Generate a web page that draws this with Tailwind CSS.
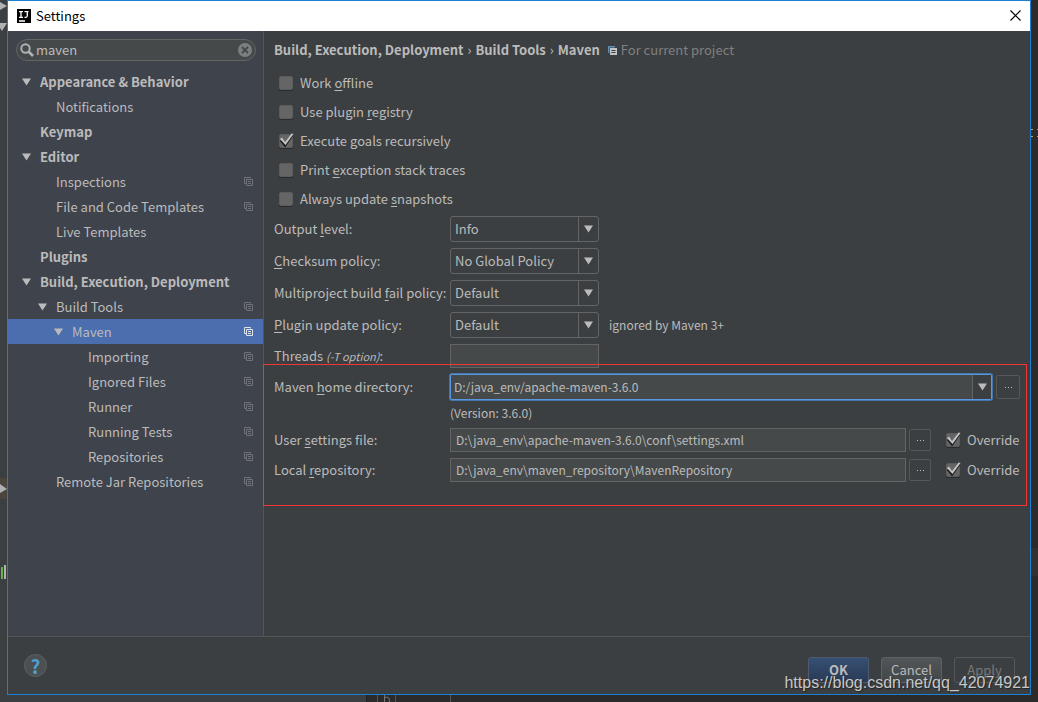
<!DOCTYPE html>
<html lang="en">
<head>
<meta charset="utf-8">
<meta name="viewport" content="width=device-width, initial-scale=1">
<title>Settings</title>
<script src="https://cdn.jsdelivr.net/npm/@tailwindcss/browser@4"></script>
</head>
<body class="relative flex min-h-screen flex-col overflow-hidden bg-[#2b2b2b] px-[7px] pb-[7px] font-['Noto_Sans_CJK_SC',sans-serif] text-[13px] leading-[18px] text-[#bbbbbb]">

<svg class="hidden">
  <symbol id="copy" viewBox="0 0 9 9"><path d="M6.5 1.5V.5H.5v6h2M2.5 2.5h6v6h-6zM4 4.5h3M4 6.5h3" fill="none" stroke="currentColor"/></symbol>
  <symbol id="down" viewBox="0 0 10 8"><path d="M0 0h10L5 8z" fill="currentColor"/></symbol>
  <symbol id="tick" viewBox="0 0 18 16"><path d="M4 7l4 5 7-10" fill="none" stroke="#1e1e1e" stroke-width="3"/><path d="M3 6l2-1.500L8 9 14.500.5l2 .5L8.500 12z" fill="#c4c4c4"/></symbol>
</svg>

<!-- editor window behind the dialog -->
<div aria-hidden="true" class="absolute inset-y-0 left-0 w-[7px] bg-[#3c3f41]">
  <svg class="h-[600px] w-[7px]" viewBox="0 0 7 600"><path d="M0 478h7v21H0z" fill="#4a463e"/><path d="M0 2l7 4-7 4zM0 23h7L2 31 0 28zM0 484l7 5-7 4z" fill="#afb1b3"/><path d="M1 567h2v12H1z" fill="#62b543"/><path d="M4 565h2v14H4z" fill="#afb1b3"/></svg>
</div>
<div aria-hidden="true" class="absolute bottom-0 left-0 flex h-[7px] w-full overflow-hidden bg-[#2b2b2b]">
  <div class="w-[367px] shrink-0 border-r border-[#222] bg-[#3c3f41]"></div>
  <svg class="h-[7px] w-[140px] shrink-0" viewBox="0 0 140 7"><path d="M10.500 0v7M28.500 0v7M83.500 0v7" stroke="#555"/><path d="M17.500 0v7M17.500 3q5-3 5 4" fill="none" stroke="#777"/></svg>
</div>
<svg aria-hidden="true" class="absolute top-[128px] right-0 h-[10px] w-[7px]" viewBox="0 0 7 10"><path d="M0 1.500h2M0 8.500h2M6 1.500h1M6 8.500h1" stroke="#c9a255"/></svg>
<div aria-hidden="true" class="absolute top-[548px] right-0 h-7 w-[7px] bg-[#323232]"></div>

<div class="relative flex flex-1 flex-col border border-[#1b80d3] bg-[#3c3f41]">
  <header class="flex h-[30px] items-center justify-between bg-white pr-[7px] pb-px pl-[9px] text-black">
    <div class="flex items-center gap-[5px]">
      <svg class="size-[14px]" viewBox="0 0 14 14"><path d="M0 0h14v14H0z"/><path d="M2 2.700h4M4 2.500v6M2 8.300h4M7.500 2.700h4M10.300 2.500v4.300q0 1.500-1.500 1.500H7.500M2 12h6" fill="none" stroke="#fff" stroke-width="1.300"/></svg>
      <h1>Settings</h1>
    </div>
    <button aria-label="Close" class="p-0.5"><svg class="size-[11px]" viewBox="0 0 11 11"><path d="M.5.5l10 10M10.500.5l-10 10" stroke="#000" stroke-width="1.200"/></svg></button>
  </header>

  <div class="flex flex-1">
    <nav class="flex w-64 shrink-0 flex-col border-r border-[#555555] bg-[#3f434c] pt-2">
      <label class="mr-[7px] mb-2 ml-2 flex h-[22px] items-center gap-0.5 rounded-full border border-[#646464] bg-[#45494a] px-[3px]">
        <svg class="size-[14px] shrink-0" viewBox="0 0 14 14"><circle cx="5.500" cy="5.500" r="4.200" fill="none" stroke="#afb1b3" stroke-width="2"/><path d="M8.500 8.500l4.500 4.500" stroke="#afb1b3" stroke-width="2.600"/></svg>
        <input aria-label="Search settings" value="maven" class="min-w-0 flex-1 bg-transparent outline-none">
        <button aria-label="Clear" class="grid size-[14px] shrink-0 place-items-center"><svg class="size-[14px]" viewBox="0 0 14 14"><circle cx="7" cy="7" r="7" fill="#7c7f80"/><path d="M4 4l6 6M10 4l-6 6" stroke="#45494a" stroke-width="1.800"/></svg></button>
      </label>
      <ul class="[&_li]:flex [&_li]:h-[25px] [&_li]:items-center [&_li]:pr-[10px] [&_span]:flex-1">
        <li class="gap-[9px] pl-[14px] font-bold"><svg class="h-2 w-[9px]"><use href="#down"/></svg><span>Appearance &amp; Behavior</span></li>
        <li class="pl-12"><span>Notifications</span></li>
        <li class="pl-8 font-bold"><span>Keymap</span></li>
        <li class="gap-[9px] pl-[14px] font-bold"><svg class="h-2 w-[9px]"><use href="#down"/></svg><span>Editor</span></li>
        <li class="pl-12"><span>Inspections</span><svg class="size-[9px] text-[#6f7277]"><use href="#copy"/></svg></li>
        <li class="pl-12"><span>File and Code Templates</span><svg class="size-[9px] text-[#6f7277]"><use href="#copy"/></svg></li>
        <li class="pl-12"><span>Live Templates</span></li>
        <li class="pl-8 font-bold"><span>Plugins</span></li>
        <li class="gap-[9px] pl-[14px] font-bold"><svg class="h-2 w-[9px]"><use href="#down"/></svg><span>Build, Execution, Deployment</span></li>
        <li class="gap-[9px] pl-[30px]"><svg class="h-2 w-[9px]"><use href="#down"/></svg><span>Build Tools</span><svg class="size-[9px] text-[#6f7277]"><use href="#copy"/></svg></li>
        <li class="gap-[9px] bg-[#4b6eaf] pl-[46px]"><svg class="h-2 w-[9px]"><use href="#down"/></svg><span>Maven</span><svg class="size-[9px] text-[#dfe3ea]"><use href="#copy"/></svg></li>
        <li class="pl-20"><span>Importing</span><svg class="size-[9px] text-[#6f7277]"><use href="#copy"/></svg></li>
        <li class="pl-20"><span>Ignored Files</span><svg class="size-[9px] text-[#6f7277]"><use href="#copy"/></svg></li>
        <li class="pl-20"><span>Runner</span><svg class="size-[9px] text-[#6f7277]"><use href="#copy"/></svg></li>
        <li class="pl-20"><span>Running Tests</span><svg class="size-[9px] text-[#6f7277]"><use href="#copy"/></svg></li>
        <li class="pl-20"><span>Repositories</span><svg class="size-[9px] text-[#6f7277]"><use href="#copy"/></svg></li>
        <li class="pl-12"><span>Remote Jar Repositories</span><svg class="size-[9px] text-[#6f7277]"><use href="#copy"/></svg></li>
      </ul>
    </nav>

    <main class="relative min-w-0 flex-1 px-[10px]">
      <div class="flex h-[37px] items-center gap-1 pt-px font-bold">
        <span>Build, Execution, Deployment</span><span class="font-normal">›</span><span>Build Tools</span><span class="font-normal">›</span><span>Maven</span>
        <svg class="ml-1 size-[9px]" viewBox="0 0 9 9"><path d="M0 0h7v1.500H1.500V7H0z" fill="#5b8fb0"/><path d="M2 2h7v7H2z" fill="#c0c3c5"/><path d="M3.500 4.500h4M3.500 6.500h4" stroke="#3c3f41"/></svg>
        <span class="font-normal text-[#808080]">For current project</span>
      </div>

      <div class="flex flex-col items-start pl-[3px] [&_input]:col-start-1 [&_input]:row-start-1 [&_svg]:col-start-1 [&_svg]:row-start-1">
        <label class="flex h-[29px] items-center gap-[5px]"><span class="grid place-items-center"><input type="checkbox" class="peer size-[14px] appearance-none rounded-xs border border-[#5a5c5d] bg-[#656565] shadow-[0_1px_0_#292b2c]"><svg class="pointer-events-none invisible h-4 w-[18px] peer-checked:visible"><use href="#tick"/></svg></span><span>Work <u class="underline-offset-2">o</u>ffline</span></label>
        <label class="flex h-[29px] items-center gap-[5px]"><span class="grid place-items-center"><input type="checkbox" class="peer size-[14px] appearance-none rounded-xs border border-[#5a5c5d] bg-[#656565] shadow-[0_1px_0_#292b2c]"><svg class="pointer-events-none invisible h-4 w-[18px] peer-checked:visible"><use href="#tick"/></svg></span><span>Use plugin <u class="underline-offset-2">r</u>egistry</span></label>
        <label class="flex h-[29px] items-center gap-[5px]"><span class="grid place-items-center"><input type="checkbox" checked class="peer size-[14px] appearance-none rounded-xs border border-[#5a5c5d] bg-[#656565] shadow-[0_1px_0_#292b2c]"><svg class="pointer-events-none invisible h-4 w-[18px] peer-checked:visible"><use href="#tick"/></svg></span><span>Execute <u class="underline-offset-2">g</u>oals recursively</span></label>
        <label class="flex h-[29px] items-center gap-[5px]"><span class="grid place-items-center"><input type="checkbox" class="peer size-[14px] appearance-none rounded-xs border border-[#5a5c5d] bg-[#656565] shadow-[0_1px_0_#292b2c]"><svg class="pointer-events-none invisible h-4 w-[18px] peer-checked:visible"><use href="#tick"/></svg></span><span>Print <u class="underline-offset-2">e</u>xception stack traces</span></label>
        <label class="flex h-[29px] items-center gap-[5px]"><span class="grid place-items-center"><input type="checkbox" class="peer size-[14px] appearance-none rounded-xs border border-[#5a5c5d] bg-[#656565] shadow-[0_1px_0_#292b2c]"><svg class="pointer-events-none invisible h-4 w-[18px] peer-checked:visible"><use href="#tick"/></svg></span><span>Always update <u class="underline-offset-2">s</u>napshots</span></label>
      </div>

      <div class="mt-[3px] grid grid-cols-[176px_minmax(0,1fr)] items-center gap-y-1.5">
        <label for="output">Output <u class="underline-offset-2">l</u>evel:</label>
        <div class="grid h-[26px] w-[149px]">
          <select id="output" class="col-start-1 row-start-1 appearance-none rounded-[3px] border border-[#646464] pb-px pl-1 outline-none"><option>Info</option></select>
          <span class="pointer-events-none col-start-1 row-start-1 my-px mr-px grid w-5 place-items-center justify-self-end border-l border-[#646464]"><svg class="h-2 w-[9px]"><use href="#down"/></svg></span>
        </div>
        <label for="checksum"><u class="underline-offset-2">C</u>hecksum policy:</label>
        <div class="grid h-[26px] w-[149px]">
          <select id="checksum" class="col-start-1 row-start-1 appearance-none rounded-[3px] border border-[#646464] pb-px pl-1 outline-none"><option>No Global Policy</option></select>
          <span class="pointer-events-none col-start-1 row-start-1 my-px mr-px grid w-5 place-items-center justify-self-end border-l border-[#646464]"><svg class="h-2 w-[9px]"><use href="#down"/></svg></span>
        </div>
        <label for="fail">Multiproject build <u class="underline-offset-2">f</u>ail policy:</label>
        <div class="grid h-[26px] w-[149px]">
          <select id="fail" class="col-start-1 row-start-1 appearance-none rounded-[3px] border border-[#646464] pb-px pl-1 outline-none"><option>Default</option></select>
          <span class="pointer-events-none col-start-1 row-start-1 my-px mr-px grid w-5 place-items-center justify-self-end border-l border-[#646464]"><svg class="h-2 w-[9px]"><use href="#down"/></svg></span>
        </div>
        <label for="update"><u class="underline-offset-2">P</u>lugin update policy:</label>
        <div class="flex items-center gap-[10px]">
          <div class="grid h-[26px] w-[149px]">
            <select id="update" class="col-start-1 row-start-1 appearance-none rounded-[3px] border border-[#646464] pb-px pl-1 outline-none"><option>Default</option></select>
            <span class="pointer-events-none col-start-1 row-start-1 my-px mr-px grid w-5 place-items-center justify-self-end border-l border-[#646464]"><svg class="h-2 w-[9px]"><use href="#down"/></svg></span>
          </div>
          <span class="text-[12px]">ignored by Maven 3+</span>
        </div>
        <label for="threads">Threads <i class="text-[11px]">(-T option)</i>:</label>
        <input id="threads" class="h-6 w-[149px] border border-[#646464] bg-[#45494a] px-1 outline-none">

        <label for="home">Maven <u class="underline-offset-2">h</u>ome directory:</label>
        <div class="flex items-center gap-1">
          <div class="flex h-[26px] min-w-0 flex-1 rounded-xs border border-[#5a97dc] bg-[#45494a] ring-1 ring-[#4377ab]">
            <input id="home" value="D:/java_env/apache-maven-3.6.0" class="min-w-0 flex-1 pb-px pl-[3px] text-[12px] outline-none">
            <button aria-label="Show list" class="grid w-[19px] place-items-center border-l border-[#646464] bg-[#3c3f41]"><svg class="h-2 w-[9px]"><use href="#down"/></svg></button>
          </div>
          <button aria-label="Browse Maven home" class="grid size-6 place-items-center rounded-xs border border-[#55585a]"><svg class="h-px w-[7px]" viewBox="0 0 7 1"><path d="M0 0h1v1H0zM3 0h1v1H3zM6 0h1v1H6z" fill="#bbb"/></svg></button>
        </div>
        <p class="col-start-2 h-4 text-[12px] leading-[14px]">(Version: 3.6.0)</p>

        <label for="user">User <u class="underline-offset-2">s</u>ettings file:</label>
        <div class="flex items-center">
          <input id="user" value="D:\java_env\apache-maven-3.6.0\conf\settings.xml" class="h-6 min-w-0 flex-1 border border-[#646464] bg-[#45494a] pb-0.5 pl-[5px] text-[12px] outline-none">
          <button aria-label="Browse user settings file" class="ml-[3px] grid size-[22px] place-items-center rounded-xs border border-[#55585a]"><svg class="h-px w-[7px]" viewBox="0 0 7 1"><path d="M0 0h1v1H0zM3 0h1v1H3zM6 0h1v1H6z" fill="#bbb"/></svg></button>
          <label class="ml-[13px] flex w-[76px] items-center gap-[5px]"><span class="grid shrink-0 place-items-center"><input type="checkbox" checked class="peer col-start-1 row-start-1 size-[14px] appearance-none rounded-xs border border-[#5a5c5d] bg-[#656565] shadow-[0_1px_0_#292b2c]"><svg class="pointer-events-none invisible col-start-1 row-start-1 h-4 w-[18px] peer-checked:visible"><use href="#tick"/></svg></span>Override</label>
        </div>

        <label for="repo">Local <u class="underline-offset-2">r</u>epository:</label>
        <div class="flex items-center">
          <input id="repo" value="D:\java_env\maven_repository\MavenRepository" class="h-6 min-w-0 flex-1 border border-[#646464] bg-[#45494a] pb-0.5 pl-[5px] text-[12px] outline-none">
          <button aria-label="Browse local repository" class="ml-[3px] grid size-[22px] place-items-center rounded-xs border border-[#55585a]"><svg class="h-px w-[7px]" viewBox="0 0 7 1"><path d="M0 0h1v1H0zM3 0h1v1H3zM6 0h1v1H6z" fill="#bbb"/></svg></button>
          <label class="ml-[13px] flex w-[76px] items-center gap-[5px]"><span class="grid shrink-0 place-items-center"><input type="checkbox" checked class="peer col-start-1 row-start-1 size-[14px] appearance-none rounded-xs border border-[#5a5c5d] bg-[#656565] shadow-[0_1px_0_#292b2c]"><svg class="pointer-events-none invisible col-start-1 row-start-1 h-4 w-[18px] peer-checked:visible"><use href="#tick"/></svg></span>Override</label>
        </div>
      </div>

      <!-- highlight around the Maven paths -->
      <div class="pointer-events-none absolute top-[333px] right-[3px] -left-px h-[142px] border border-[#f23535]"></div>
    </main>
  </div>

  <footer class="flex h-[58px] items-center justify-between border-t border-[#555555] pr-[15px] pl-4">
    <button aria-label="Help" class="size-[23px] rounded-full border border-[#5e6162] bg-[#4c5052] text-[19px] leading-5 font-bold text-[#4f9fcf]">?</button>
    <div class="mt-2 flex gap-3">
      <button class="h-[26px] w-[61px] rounded-[3px] border border-[#4c5b6d] bg-linear-to-b from-[#365073] to-[#293a55] font-bold">OK</button>
      <button class="h-[26px] w-[61px] rounded-[3px] border border-[#5e6162] bg-linear-to-b from-[#525658] to-[#414648]">Cancel</button>
      <button disabled class="h-[26px] w-[61px] rounded-[3px] border border-[#55585a] text-[#777777]">Apply</button>
    </div>
  </footer>
  <!-- watermark -->
  <div class="pointer-events-none absolute right-0 bottom-px font-['Liberation_Sans',sans-serif] text-[16px] leading-5 text-[#c8c8c8] [text-shadow:1px_1px_1px_#222]">https://blog.csdn.net/qq_42074921</div>
</div>
</body>
</html>
